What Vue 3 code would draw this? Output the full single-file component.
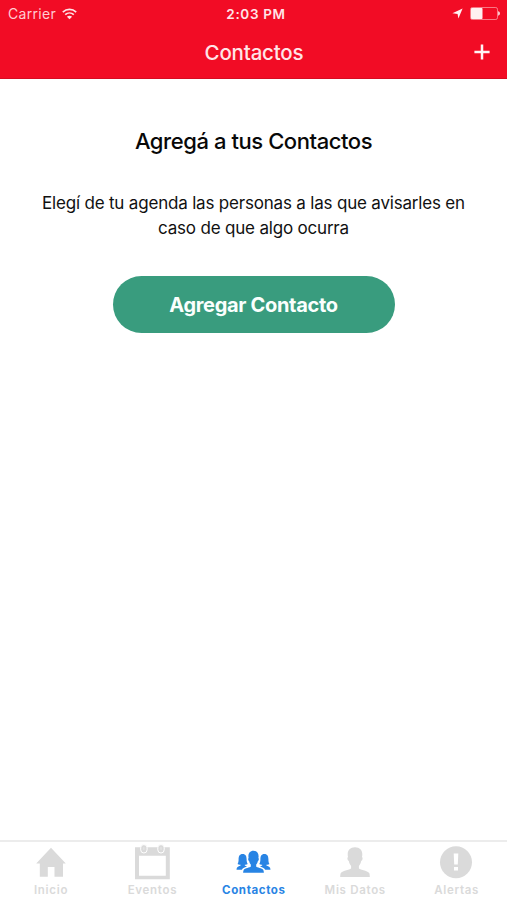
<script setup>
const tabs = [
  { id: 'inicio', label: 'Inicio' },
  { id: 'eventos', label: 'Eventos' },
  { id: 'contactos', label: 'Contactos' },
  { id: 'datos', label: 'Mis Datos' },
  { id: 'alertas', label: 'Alertas' },
]
const active = 'contactos'
</script>

<template>
  <div class="screen">
    <header class="header">
      <div class="status">
        <div class="status-left">
          <span class="carrier">Carrier</span>
          <svg class="wifi" width="15" height="12" viewBox="0 0 15 12">
            <path d="M.8 4.1C4.7.5 10.3.5 14.2 4.1M3.2 6.7c2.5-2.3 6.1-2.3 8.6 0" fill="none" stroke="currentColor" stroke-width="1.7" />
            <path d="M4.9 8.7c1.5-1.3 3.7-1.3 5.2 0L7.5 11.3z" fill="currentColor" />
          </svg>
        </div>
        <span class="time">2:03 PM</span>
        <div class="status-right">
          <svg width="11" height="11" viewBox="0 0 11 11">
            <path d="M10.6.6 6.4 10.6 5.6 6 .4 5.2z" fill="currentColor" />
          </svg>
          <svg width="30" height="13" viewBox="0 0 30 13">
            <rect x=".5" y=".5" width="27" height="12" rx="1.8" fill="none" stroke="currentColor" stroke-width=".8" opacity=".6" />
            <rect x="1" y="1" width="11.5" height="11" rx=".8" fill="currentColor" />
            <path d="M28.2 4.3c2.2.6 2.2 3.8 0 4.4z" fill="currentColor" />
          </svg>
        </div>
      </div>
      <div class="nav">
        <h1 class="nav-title">Contactos</h1>
        <button class="add" aria-label="Agregar">
          <svg width="16" height="16" viewBox="0 0 16 16">
            <path d="M8 .4v15.2M.4 8h15.2" stroke="currentColor" stroke-width="2.5" />
          </svg>
        </button>
      </div>
    </header>

    <main class="content">
      <h2 class="heading">Agregá a tus Contactos</h2>
      <p class="copy"><span class="line">Elegí de tu agenda las personas a las que avisarles en</span> <span class="line">caso de que algo ocurra</span></p>
      <button class="cta">Agregar Contacto</button>
    </main>

    <nav class="tabs">
      <button v-for="tab in tabs" :key="tab.id" class="tab" :class="{ active: tab.id === active }">
        <svg class="icon" width="38" height="38" viewBox="0 0 38 38">
          <path v-if="tab.id === 'inicio'" d="M19 3.8 33.8 19.5H31V32.8H22.5V23H15.8V32.8H7.8V19.5H4.2z" fill="currentColor" />
          <template v-else-if="tab.id === 'eventos'">
            <path d="M2 3.2H36.8V35.2H2zM6 11.8V31.7H32.8V11.8z" fill="currentColor" fill-rule="evenodd" />
            <g fill="currentColor" stroke="#fff" stroke-width="1">
              <rect x="7.7" y=".6" width="6.4" height="8.4" rx="3.2" />
              <rect x="24.8" y=".6" width="6.4" height="8.4" rx="3.2" />
            </g>
            <path d="M10.9 3.2v2.6M28 3.2v2.6" stroke="#fff" stroke-width=".8" opacity=".5" />
          </template>
          <g v-else-if="tab.id === 'contactos'" fill="currentColor" transform="translate(.5 0)">
            <path d="M19 6.7c3.4 0 5.1 2.3 5.1 5.6 0 .7-.1 1.2-.2 1.7.8.3.5 2.7-.5 3.1-.4 1.7-1.1 2.8-1.7 3.5v1.8c.6 1.2 6.1 1.4 7.1 3.6.4.8.5 1.7.6 2.8H8.6c.1-1.1.2-2 .6-2.8 1-2.2 6.5-2.4 7.1-3.6v-1.8c-.6-.7-1.3-1.8-1.7-3.5-1-.4-1.3-2.8-.5-3.1-.1-.5-.2-1-.2-1.7 0-3.3 1.7-5.6 5.1-5.6z" />
            <path d="M8.1 9.9c3.2 0 4 2.5 4 5.1 0 2.3.4 4.2 1.2 5.1-.8.7-1.9.8-3 .7v.8l2.2.9c-3 .9-4.5 1.8-5.2 3.3H2c.1-2.8 1.4-3.2 4.1-4.2v-.8c-1.2.1-2.3 0-3.1-.7.8-.9 1.1-2.8 1.1-5.1 0-2.6.9-5.1 4-5.1z" />
            <path d="M29.9 9.9c-3.2 0-4 2.5-4 5.1 0 2.3-.4 4.2-1.2 5.1.8.7 1.9.8 3 .7v.8l-2.2.9c3 .9 4.5 1.8 5.2 3.3H36c-.1-2.8-1.4-3.2-4.1-4.2v-.8c1.2.1 2.3 0 3.1-.7-.8-.9-1.1-2.8-1.1-5.1 0-2.6-.9-5.1-4-5.1z" />
          </g>
          <path v-else-if="tab.id === 'datos'" d="M19 3.2c4.8 0 7.3 2.9 7.3 7.1 0 1.2-.1 2-.3 2.7 1.1.5.6 3.5-.8 4-.5 2.4-1.4 3.9-2.3 4.9v2.3c0 1.7 8.9 2 10.3 4.9.5 1.1.5 2.3.6 4H4.2c.1-1.7.1-2.9.6-4 1.4-2.9 10.3-3.2 10.3-4.9v-2.3c-.9-1-1.8-2.5-2.3-4.9-1.4-.5-1.9-3.5-.8-4-.2-.7-.3-1.5-.3-2.7 0-4.2 2.5-7.1 7.3-7.1z" fill="currentColor" />
          <template v-else>
            <circle cx="19" cy="18.2" r="16" fill="currentColor" />
            <path d="M16.7 9.4h4.6L20.8 20.4h-3.6zM17 22.9h4v3.7h-4z" fill="#fff" />
          </template>
        </svg>
        <span class="label">{{ tab.label }}</span>
      </button>
    </nav>
  </div>
</template>

<style>
body {
  margin: 0;
  background: #fff;
}
</style>

<style scoped>
.screen {
  display: flex;
  flex-direction: column;
  height: 900px;
  font-family: Inter, "Liberation Sans", sans-serif;
  color: #111;
  background: #fff;
}
button {
  padding: 0;
  border: 0;
  background: none;
  font: inherit;
  color: inherit;
}
svg {
  display: block;
}
.header {
  box-sizing: border-box;
  height: 79px;
  color: #ffe4e7;
  background: #f20c25;
  border-bottom: 1px solid #d60c22;
}
.status {
  display: grid;
  grid-template-columns: 1fr auto 1fr;
  align-items: center;
  height: 27px;
  padding: 0 7px 0 8px;
}
.status-left,
.status-right {
  display: flex;
  align-items: center;
}
.status-left {
  gap: 6px;
}
.status-right {
  justify-content: flex-end;
  gap: 7px;
  color: #fff0f1;
}
.carrier {
  font-size: 14px;
  letter-spacing: 0.3px;
  color: #ffccd2;
}
.time {
  padding-left: 4px;
  font-size: 13.5px;
  font-weight: 600;
  letter-spacing: 0.65px;
}
.nav {
  display: grid;
  grid-template-columns: 1fr auto 1fr;
  align-items: center;
  height: 50px;
  padding: 0 17px;
}
.nav-title {
  grid-column: 2;
  margin: 0;
  padding: 1px 0 0 1px;
  font-size: 20.5px;
  font-weight: 450;
  letter-spacing: -0.18px;
}
.add {
  justify-self: end;
  color: #fff4f5;
}
.content {
  flex: 1;
  display: flex;
  flex-direction: column;
  align-items: center;
  padding-top: 47px;
}
.heading {
  margin: 0;
  font-size: 22px;
  font-weight: 500;
  line-height: 30px;
  letter-spacing: -0.43px;
  color: #080808;
}
.copy {
  margin: 35px 0 0;
  font-size: 17px;
  line-height: 25px;
  letter-spacing: -0.19px;
  text-align: center;
}
.line {
  display: block;
  white-space: nowrap;
}
.cta {
  width: 282px;
  height: 57px;
  margin-top: 35px;
  border-radius: 29px;
  background: #399c7e;
  color: #fafffd;
  font-size: 20px;
  font-weight: 650;
  letter-spacing: -0.32px;
}
.tabs {
  display: grid;
  grid-template-columns: repeat(5, 1fr);
  box-sizing: border-box;
  height: 60px;
  border-top: 2px solid #ececec;
}
.tab {
  display: flex;
  flex-direction: column;
  align-items: center;
  padding-top: 2px;
  color: #dadada;
}
.tab.active {
  color: #2884e4;
}
.label {
  margin-top: 1px;
  padding-left: 0.7px;
  font-size: 11.5px;
  font-weight: 600;
  line-height: 14px;
  letter-spacing: 0.7px;
  white-space: nowrap;
}
.tab.active .label {
  font-weight: 700;
  letter-spacing: 0.6px;
}
</style>
